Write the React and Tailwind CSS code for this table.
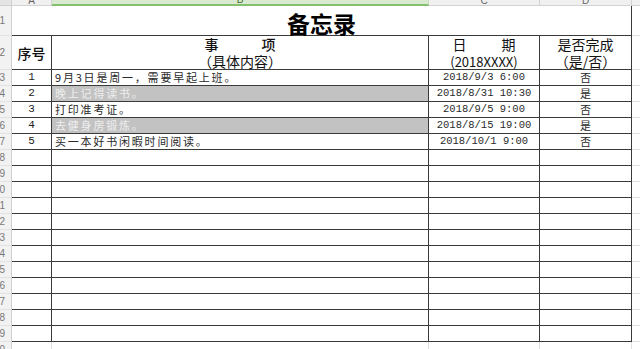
const tasks = [
  { n: '1', text: '9月3日是周一，需要早起上班。', date: '2018/9/3 6:00', done: '否' },
  { n: '2', text: '晚上记得读书。', date: '2018/8/31 10:30', done: '是', grey: true },
  { n: '3', text: '打印准考证。', date: '2018/9/5 9:00', done: '否' },
  { n: '4', text: '去健身房锻炼。', date: '2018/8/15 19:00', done: '是', grey: true },
  { n: '5', text: '买一本好书闲暇时间阅读。', date: '2018/10/1 9:00', done: '否' },
]

const cjk = "font-['Noto_Sans_CJK_SC',sans-serif]"
const mono = "font-['Liberation_Mono',monospace]"

function RowHead({ n }) {
  return (
    <div className="flex items-center justify-end overflow-hidden pr-[6px] bg-[#f2f2f2] border-r border-b border-r-[#cfcfcf] border-b-[#e2e2e2] font-['Liberation_Sans',sans-serif] text-[10px] text-[#777]">
      {n}
    </div>
  )
}

function ColHead({ label, active }) {
  if (active) {
    return (
      <div className="flex items-end justify-center overflow-hidden bg-[#d9ead0] border-r border-b-2 border-r-[#c6dcb9] border-b-[#86bf6f] font-['Liberation_Sans',sans-serif] text-[10px] leading-none text-[#3d6b2c]">
        <span className="-mb-[1px]">{label}</span>
      </div>
    )
  }
  return (
    <div className="flex items-end justify-center overflow-hidden bg-[#f0f0f0] border-r border-b border-[#d2d2d2] font-['Liberation_Sans',sans-serif] text-[10px] leading-none text-[#666]">
      <span className="-mb-[1px]">{label}</span>
    </div>
  )
}

export default function App() {
  const body = []
  for (let i = 0; i < 17; i++) {
    const t = tasks[i]
    body.push(
      <RowHead key={'h' + i} n={i + 3} />,
      <div key={'a' + i} className={`flex items-center justify-center border-r border-b border-[#3a3a3a] ${mono} text-[11px] text-[#222]`}>
        {t ? t.n : ''}
      </div>,
      <div
        key={'b' + i}
        className={`flex items-center pl-[3px] border-r border-b border-[#3a3a3a] ${cjk} text-[11px] tracking-[1.8px] ${t && t.grey ? 'bg-[#c2c2c2] text-[#eeeeee]' : 'text-[#2a2a2a]'}`}
      >
        {t ? t.text : ''}
      </div>,
      <div key={'c' + i} className={`flex items-center justify-center border-r border-b border-[#3a3a3a] ${mono} text-[10.5px] text-[#2a2a2a]`}>
        {t ? t.date : ''}
      </div>,
      <div key={'d' + i} className={`flex items-center justify-center border-r border-b border-[#3a3a3a] ${cjk} text-[11px] text-[#2a2a2a]`}>
        {t ? t.done : ''}
      </div>,
      <div key={'e' + i} className="border-b border-[#e0e0e0]" />
    )
  }

  return (
    <div className="h-[349px] w-[640px] overflow-hidden bg-white">
      <div className="grid grid-cols-[12px_40px_377px_111px_92px_1fr] grid-rows-[6px_30px_34px_repeat(18,16px)]">
        {/* column letters */}
        <div className="bg-[#e4e4e4] border-r border-b border-[#cfcfcf]" />
        <ColHead label="A" />
        <ColHead label="B" active />
        <ColHead label="C" />
        <ColHead label="D" />
        <div className="bg-[#f0f0f0] border-b border-[#d2d2d2]" />

        {/* row 1 : title */}
        <RowHead n={1} />
        <div className={`col-span-4 flex items-center justify-center pt-[5px] border-r border-b border-[#3a3a3a] ${cjk} text-[23px] font-semibold text-black leading-none`}>
          备忘录
        </div>
        <div className="border-b border-[#e0e0e0]" />

        {/* row 2 : headings */}
        <RowHead n={2} />
        <div className={`flex items-center justify-center pt-[2px] border-r border-b border-[#3a3a3a] ${cjk} text-[14px] font-medium text-[#111]`}>
          序号
        </div>
        <div className={`flex flex-col items-center justify-center pt-[1px] border-r border-b border-[#3a3a3a] ${cjk} text-[14px] leading-[17px] text-[#111]`}>
          <div className="flex gap-[43px] font-medium">
            <span>事</span>
            <span>项</span>
          </div>
          <div>（具体内容）</div>
        </div>
        <div className={`flex flex-col items-center justify-center pt-[1px] border-r border-b border-[#3a3a3a] ${cjk} text-[14px] leading-[17px] text-[#111]`}>
          <div className="flex gap-[35px]">
            <span>日</span>
            <span>期</span>
          </div>
          <div className="text-[13px]">(2018XXXX)</div>
        </div>
        <div className={`flex flex-col items-center justify-center pt-[1px] border-r border-b border-[#3a3a3a] ${cjk} text-[14px] leading-[17px] text-[#111]`}>
          <div>是否完成</div>
          <div>（是/否）</div>
        </div>
        <div className="border-b border-[#e0e0e0]" />

        {body}

        {/* row 20 */}
        <RowHead n={20} />
        <div className="border-r border-b border-[#e0e0e0]" />
        <div className="border-r border-b border-[#e0e0e0]" />
        <div className="border-r border-b border-[#e0e0e0]" />
        <div className="border-r border-b border-[#e0e0e0]" />
        <div className="border-b border-[#e0e0e0]" />
      </div>
    </div>
  )
}
